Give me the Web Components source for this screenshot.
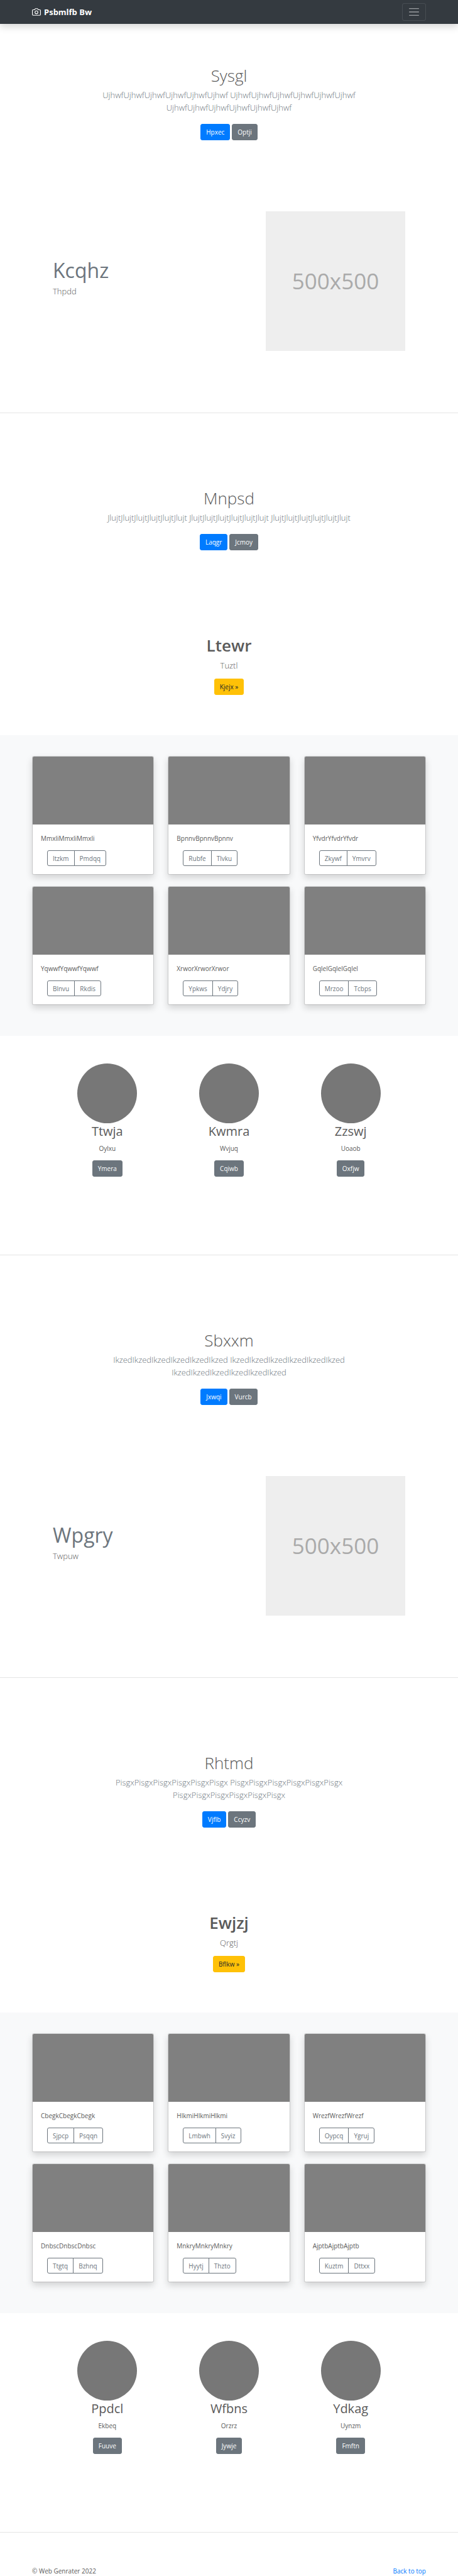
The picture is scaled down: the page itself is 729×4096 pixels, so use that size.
<!DOCTYPE html>
<html lang="en">
<head>
<meta charset="utf-8">
<meta name="viewport" content="width=device-width, initial-scale=1">
<title>Psbmlfb Bw</title>
<style>
  body {
    margin: 0;
    background: #fff;
    color: #5a5a5a;
    font: 400 10px/16px "Open Sans", "Noto Sans", sans-serif;
    --gutter: 51px;
    --muted: #6c757d;
  }
</style>
</head>
<body>
<site-nav id="top">Psbmlfb Bw</site-nav>
<main>
  <hero-block first>
    <span slot="title">Sysgl</span>
    UjhwfUjhwfUjhwfUjhwfUjhwfUjhwf UjhwfUjhwfUjhwfUjhwfUjhwfUjhwf UjhwfUjhwfUjhwfUjhwfUjhwfUjhwf
    <ui-button slot="actions" variant="primary">Hpxec</ui-button>
    <ui-button slot="actions">Optji</ui-button>
  </hero-block>
  <feature-row><span slot="title">Kcqhz</span>Thpdd</feature-row>
  <page-rule></page-rule>
  <hero-block>
    <span slot="title">Mnpsd</span>
    JlujtJlujtJlujtJlujtJlujtJlujt JlujtJlujtJlujtJlujtJlujtJlujt JlujtJlujtJlujtJlujtJlujtJlujt
    <ui-button slot="actions" variant="primary">Laqgr</ui-button>
    <ui-button slot="actions">Jcmoy</ui-button>
  </hero-block>
  <call-out>
    <span slot="title">Ltewr</span>Tuztl
    <ui-button slot="actions" variant="warning">Kjejx »</ui-button>
  </call-out>
  <photo-album>
    <photo-card first="Itzkm" second="Pmdqq">MmxliMmxliMmxli</photo-card>
    <photo-card first="Rubfe" second="Tlvku">BpnnvBpnnvBpnnv</photo-card>
    <photo-card first="Zkywf" second="Ymvrv">YfvdrYfvdrYfvdr</photo-card>
    <photo-card first="Blnvu" second="Rkdis">YqwwfYqwwfYqwwf</photo-card>
    <photo-card first="Ypkws" second="Ydjry">XrworXrworXrwor</photo-card>
    <photo-card first="Mrzoo" second="Tcbps">GqlelGqlelGqlel</photo-card>
  </photo-album>
  <team-row>
    <team-member action="Ymera"><span slot="name">Ttwja</span>Oylxu</team-member>
    <team-member action="Cqiwb"><span slot="name">Kwmra</span>Wvjuq</team-member>
    <team-member action="Oxfjw"><span slot="name">Zzswj</span>Uoaob</team-member>
  </team-row>
  <page-rule></page-rule>
  <hero-block>
    <span slot="title">Sbxxm</span>
    IkzedIkzedIkzedIkzedIkzedIkzed IkzedIkzedIkzedIkzedIkzedIkzed IkzedIkzedIkzedIkzedIkzedIkzed
    <ui-button slot="actions" variant="primary">Jxwqi</ui-button>
    <ui-button slot="actions">Vurcb</ui-button>
  </hero-block>
  <feature-row><span slot="title">Wpgry</span>Twpuw</feature-row>
  <page-rule></page-rule>
  <hero-block>
    <span slot="title">Rhtmd</span>
    PisgxPisgxPisgxPisgxPisgxPisgx PisgxPisgxPisgxPisgxPisgxPisgx PisgxPisgxPisgxPisgxPisgxPisgx
    <ui-button slot="actions" variant="primary">Vjflb</ui-button>
    <ui-button slot="actions">Ccyzv</ui-button>
  </hero-block>
  <call-out>
    <span slot="title">Ewjzj</span>Qrgtj
    <ui-button slot="actions" variant="warning">Bflkw »</ui-button>
  </call-out>
  <photo-album>
    <photo-card first="Sjpcp" second="Psqqn">CbegkCbegkCbegk</photo-card>
    <photo-card first="Lmbwh" second="Svyiz">HlkmiHlkmiHlkmi</photo-card>
    <photo-card first="Oypcq" second="Ygruj">WrezfWrezfWrezf</photo-card>
    <photo-card first="Ttgtq" second="Bzhnq">DnbscDnbscDnbsc</photo-card>
    <photo-card first="Hyytj" second="Thzto">MnkryMnkryMnkry</photo-card>
    <photo-card first="Kuztm" second="Dttxx">AjptbAjptbAjptb</photo-card>
  </photo-album>
  <team-row>
    <team-member action="Fuuve"><span slot="name">Ppdcl</span>Ekbeq</team-member>
    <team-member action="Jywje"><span slot="name">Wfbns</span>Orzrz</team-member>
    <team-member action="Fmftn"><span slot="name">Ydkag</span>Uynzm</team-member>
  </team-row>
  <page-rule></page-rule>
</main>
<site-footer>© Web Genrater 2022</site-footer>

<script>
  // Registers an element whose shadow root is cloned from the given markup.
  function define(name, markup, setup) {
    const template = document.createElement('template');
    template.innerHTML = markup;
    customElements.define(name, class extends HTMLElement {
      constructor() {
        super();
        this.attachShadow({ mode: 'open' }).append(template.content.cloneNode(true));
      }
      connectedCallback() {
        if (setup) setup(this, this.shadowRoot);
      }
    });
  }

  define('site-nav', `
    <style>
      :host { display: block; background: #343a40; box-shadow: 0 5px 11px rgba(0,0,0,.15); }
      nav { display: flex; align-items: center; justify-content: space-between; height: 38px; padding: 0 var(--gutter); }
      a { display: flex; align-items: center; gap: 5px; color: #fff; font-size: 13px; font-weight: 700; line-height: 20px; text-decoration: none; }
      button { display: flex; align-items: center; justify-content: center; width: 38px; height: 28px; padding: 0; background: none; border: 1px solid rgba(255,255,255,.1); border-radius: 3px; }
    </style>
    <nav>
      <a href="#top">
        <svg width="14" height="14" viewBox="0 0 24 24" fill="none" stroke="currentColor" stroke-width="2" stroke-linecap="round" stroke-linejoin="round" aria-hidden="true"><path d="M23 19a2 2 0 0 1-2 2H3a2 2 0 0 1-2-2V8a2 2 0 0 1 2-2h4l2-3h6l2 3h4a2 2 0 0 1 2 2z"/><circle cx="12" cy="13" r="4"/></svg>
        <slot></slot>
      </a>
      <button type="button" aria-label="Toggle navigation">
        <svg width="20" height="20" viewBox="0 0 30 30" stroke="rgba(255,255,255,.5)" stroke-width="2" stroke-linecap="round" stroke-miterlimit="10" aria-hidden="true"><path d="M4 7h22M4 15h22M4 23h22"/></svg>
      </button>
    </nav>`);

  define('ui-button', `
    <style>
      :host { display: inline-block; }
      button { display: block; height: 26px; padding: 0 8px; border: 1px solid var(--muted); border-radius: 3px; background: var(--muted); color: #fff; font: inherit; }
      :host([variant=primary]) button { background: #007bff; border-color: #007bff; }
      :host([variant=warning]) button { background: #ffc107; border-color: #ffc107; color: #212529; }
    </style>
    <button type="button"><slot></slot></button>`);

  define('page-rule', `
    <style>
      :host { display: block; }
      hr { margin: 0; border: 0; border-top: 1px solid rgba(0,0,0,.1); }
    </style>
    <hr>`);

  define('hero-block', `
    <style>
      :host { display: block; padding-top: 119px; text-align: center; }
      :host([first]) { padding-top: 66px; }
      section { max-width: 432px; margin: 0 auto; }
      h1 { margin: 0 0 5px; font-size: 26px; font-weight: 300; line-height: 32px; }
      p { margin: 0 0 16px; color: var(--muted); font-size: 13px; font-weight: 300; line-height: 20px; }
      div { display: flex; justify-content: center; gap: 3px; }
    </style>
    <section>
      <h1><slot name="title"></slot></h1>
      <p><slot></slot></p>
      <div><slot name="actions"></slot></div>
    </section>`);

  define('call-out', `
    <style>
      :host { display: block; padding: 135px 0 64px; text-align: center; }
      h2 { margin: 0 0 6px; font-size: 26px; font-weight: 600; line-height: 32px; }
      p { margin: 0 0 11px; font-size: 13px; font-weight: 300; line-height: 20px; }
      div { display: flex; justify-content: center; }
    </style>
    <h2><slot name="title"></slot></h2>
    <p><slot></slot></p>
    <div><slot name="actions"></slot></div>`);

  define('feature-row', `
    <style>
      :host { display: block; padding: 113px 84px 98px; }
      section { display: grid; grid-template-columns: 1fr 222px; align-items: center; }
      h2 { margin: 0 0 3px; color: var(--muted); font-size: 32px; font-weight: 400; line-height: 40px; }
      p { margin: 0 0 12px; font-size: 13px; font-weight: 300; line-height: 20px; }
      figure { display: grid; place-items: center; aspect-ratio: 1; margin: 0; background: #eee; color: #aaa; font-size: 35px; line-height: 40px; }
    </style>
    <section>
      <div>
        <h2><slot name="title"></slot></h2>
        <p><slot></slot></p>
      </div>
      <figure>500x500</figure>
    </section>`);

  define('photo-album', `
    <style>
      :host { display: grid; grid-template-columns: repeat(3, 1fr); gap: 18px 22px; padding: 33px var(--gutter) 49px; background: #f8f9fa; }
    </style>
    <slot></slot>`);

  define('photo-card', `
    <style>
      :host { display: block; }
      article { overflow: hidden; background: #fff; background-clip: padding-box; border: 1px solid rgba(0,0,0,.125); border-radius: 3px; box-shadow: 0 5px 11px rgba(0,0,0,.15); }
      .photo { height: 108px; background: #808080; }
      .body { padding: 14px 13px 13px; }
      p { margin: 0 0 11px; }
      .group { display: flex; padding-left: 10px; }
      button { height: 25px; padding: 0 8px; border: 1px solid var(--muted); background: none; color: var(--muted); font: inherit; }
      button:first-child { border-radius: 3px 0 0 3px; }
      button:last-child { margin-left: -1px; border-radius: 0 3px 3px 0; }
    </style>
    <article>
      <div class="photo"></div>
      <div class="body">
        <p><slot></slot></p>
        <div class="group"><button type="button"></button><button type="button"></button></div>
      </div>
    </article>`, (host, root) => {
      const [first, second] = root.querySelectorAll('button');
      first.textContent = host.getAttribute('first');
      second.textContent = host.getAttribute('second');
    });

  define('team-row', `
    <style>
      :host { display: grid; grid-template-columns: repeat(3, 1fr); padding: 44px 74px 124px; }
    </style>
    <slot></slot>`);

  define('team-member', `
    <style>
      :host { display: flex; flex-direction: column; align-items: center; }
      .avatar { width: 95px; height: 95px; border-radius: 50%; background: #777; }
      h2 { margin: 0 0 6px; font-size: 20px; font-weight: 400; line-height: 26px; }
      p { margin: 0 0 11px; }
    </style>
    <div class="avatar"></div>
    <h2><slot name="name"></slot></h2>
    <p><slot></slot></p>
    <ui-button></ui-button>`, (host, root) => {
      root.querySelector('ui-button').textContent = host.getAttribute('action');
    });

  define('site-footer', `
    <style>
      :host { display: block; padding: 53px var(--gutter) 0; }
      footer { display: flex; justify-content: space-between; }
      a { color: #007bff; text-decoration: none; }
    </style>
    <footer><span><slot></slot></span><a href="#top">Back to top</a></footer>`);
</script>
</body>
</html>
